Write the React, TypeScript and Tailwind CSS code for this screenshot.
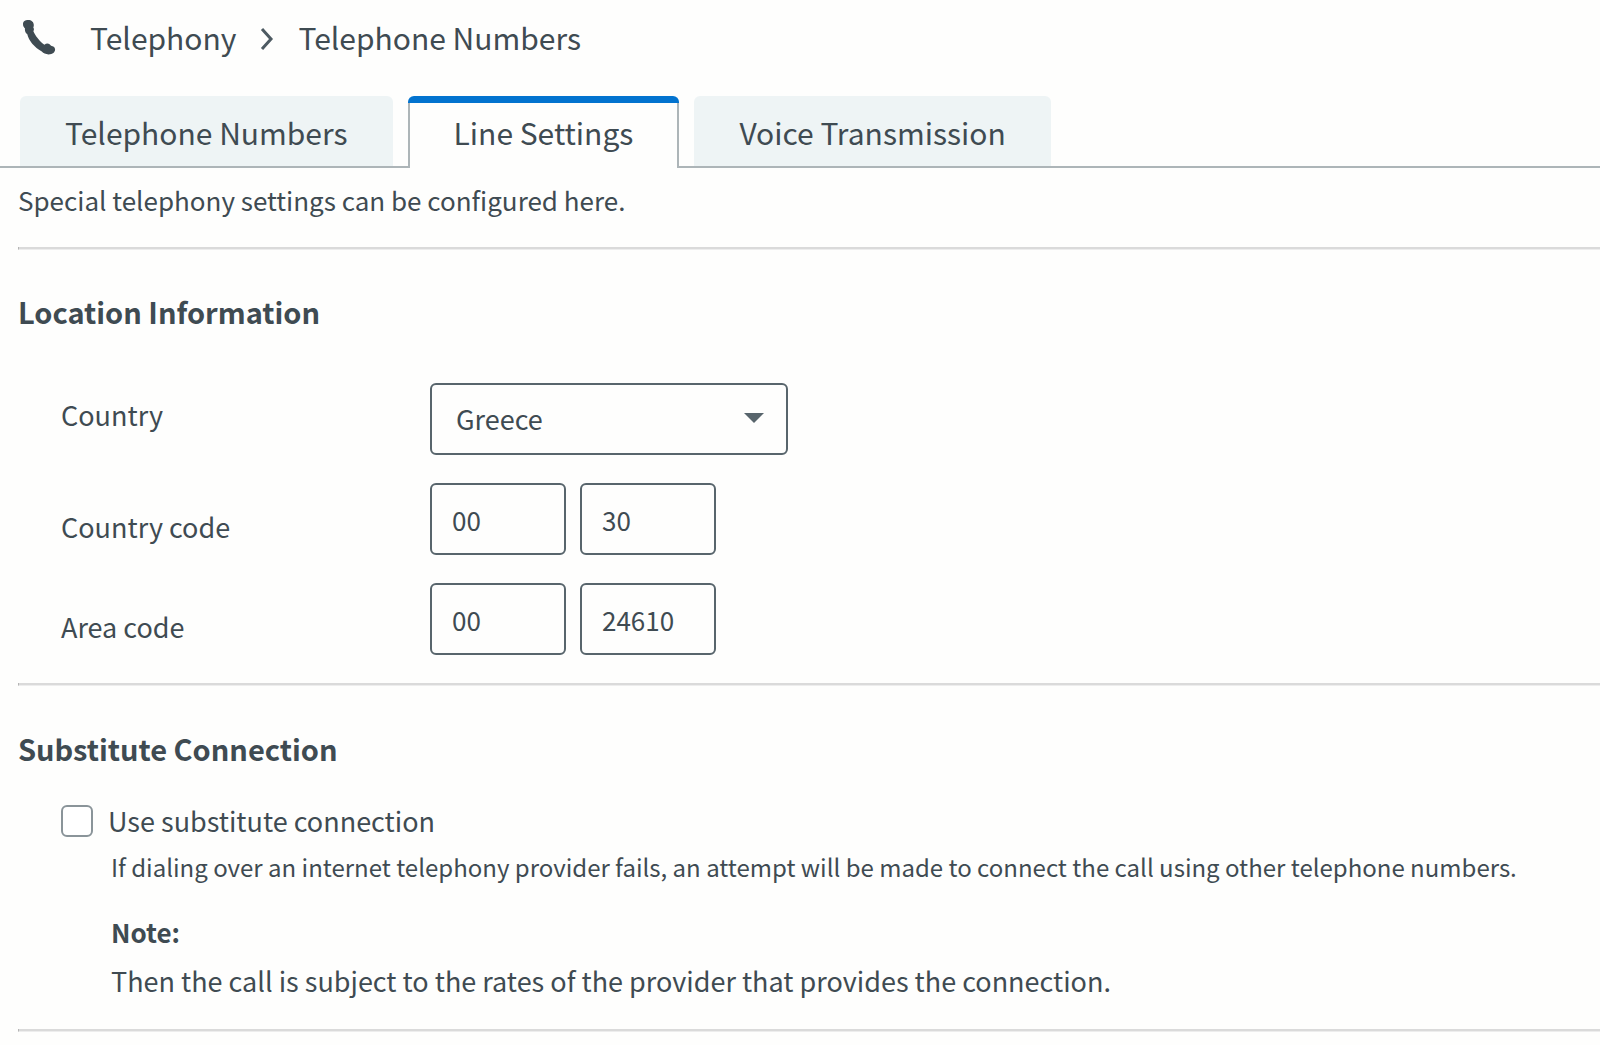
import { useState } from "react";

function PhoneIcon() {
  return (
    <svg viewBox="0 0 36 38" className="h-[38px] w-9 shrink-0" fill="#3f4b52" aria-hidden="true">
      <path d="M3 7C3 4.200 5.200 3 8.200 3c3.200 0 5.600 2 5.600 5 0 1.200-.2 1.800-.5 2.600 1 1.200.7 2.400.1 3.600 1.400 4 6.600 10.400 11 13.600 1.800-1.600 3.700-1.700 5.200-.5.600.8 1.200 1.400 2.200 1.600 2.300.4 3.300 2 3.300 3.700 0 2.600-2.400 4.800-6.500 4.800-3.100 0-5.100-1-6.800-2.800C14.300 30.400 8.600 23.500 7.300 17.300 5 15.400 4.600 13 5 11.400 3.700 10.400 3 9 3 7Z" />
    </svg>
  );
}

function ChevronIcon() {
  return (
    <svg viewBox="0 0 14 24" className="h-6 w-3.5 shrink-0" fill="none" stroke="#4d5a62" strokeWidth="3" aria-hidden="true">
      <path d="M2 2l9 10-9 10" />
    </svg>
  );
}

const tabs = ["Telephone Numbers", "Line Settings", "Voice Transmission"];

function Tabs() {
  const [active, setActive] = useState("Line Settings");
  return (
    <div role="tablist" className="flex h-[72px] gap-[15px] border-b-2 border-[#adb5b8] pl-5 text-[30px]">
      {tabs.map((tab) =>
        tab === active ? (
          <button key={tab} role="tab" aria-selected="true" className="-mb-0.5 flex flex-col overflow-hidden rounded-t-md">
            <span className="h-[7px] w-full shrink-0 bg-[#0273cf]" />
            <span className="flex w-full flex-1 items-center border-x-2 border-[#adb5b8] bg-[#fefefd] px-11 pb-[7px]">
              {tab}
            </span>
          </button>
        ) : (
          <button
            key={tab}
            role="tab"
            aria-selected="false"
            onClick={() => setActive(tab)}
            className="rounded-t-md bg-[#eef4f5] px-[45px] pt-px"
          >
            {tab}
          </button>
        ),
      )}
    </div>
  );
}

function Divider() {
  return <hr className="h-[3px] border-b border-l border-t-0 border-b-[#ededed] border-l-[#b5b5b5] bg-[#dadada]" />;
}

const field = "h-[72px] rounded-md border-2 border-[#58656c] bg-[#fefefd]";

function CodeRow({ id, label, prefix, value }: { id: string; label: string; prefix: string; value: string }) {
  return (
    <div className="flex">
      <label htmlFor={id} className="w-[369px] shrink-0 pt-6">
        {label}
      </label>
      <div className="flex gap-3.5">
        <input id={id} defaultValue={prefix} className={`${field} w-[136px] px-5 text-[26px]`} />
        <input aria-label={`${label} number`} defaultValue={value} className={`${field} w-[136px] px-5 text-[26px]`} />
      </div>
    </div>
  );
}

export default function App() {
  return (
    <div className="min-h-screen overflow-x-hidden bg-[#fefefd] font-['Noto_Sans_CJK_SC',sans-serif] text-[27px] leading-10 text-[#3f4b52]">
      <nav aria-label="Breadcrumb" className="flex h-24 items-start pl-5 pt-[17px] text-[30px]">
        <PhoneIcon />
        <a href="#telephony" className="ml-[34px]">
          Telephony
        </a>
        <span className="mx-6 flex h-11 items-center">
          <ChevronIcon />
        </span>
        <a href="#numbers">Telephone Numbers</a>
      </nav>
      <Tabs />
      <main className="pl-[18px]">
        <p className="pb-[27px] pt-3 text-[26px]">Special telephony settings can be configured here.</p>
        <Divider />
        <section className="pb-7 pt-[41px]">
          <h2 className="text-[29px] font-bold">Location Information</h2>
          <div className="flex flex-col gap-7 pl-[43px] pt-[52px]">
            <div className="flex">
              <label htmlFor="country" className="w-[369px] shrink-0 pt-3">
                Country
              </label>
              <div className="relative">
                <select id="country" className={`${field} w-[358px] appearance-none pl-6`}>
                  <option>Greece</option>
                </select>
                <svg viewBox="0 0 20 10" className="pointer-events-none absolute right-6 top-[30px] h-2.5 w-5" fill="#58656c" aria-hidden="true">
                  <path d="M0 0h20L10 10Z" />
                </svg>
              </div>
            </div>
            <CodeRow id="country-code" label="Country code" prefix="00" value="30" />
            <CodeRow id="area-code" label="Area code" prefix="00" value="24610" />
          </div>
        </section>
        <Divider />
        <section className="pb-7 pt-[42px]">
          <h2 className="text-[29px] font-bold">Substitute Connection</h2>
          <div className="pl-[43px] pt-[33px]">
            <div className="flex items-center gap-[15px]">
              <input
                id="substitute"
                type="checkbox"
                className="size-8 appearance-none rounded-md border-2 border-[#8a9499] bg-white checked:bg-[#0273cf]"
              />
              <label htmlFor="substitute">Use substitute connection</label>
            </div>
            <div className="pl-[50px]">
              <p className="pt-1.5 text-2xl leading-10">
                If dialing over an internet telephony provider fails, an attempt will be made to connect the call using other telephone numbers.
              </p>
              <p className="pt-[25px] text-[26px] font-bold">Note:</p>
              <p className="pt-[9px]">Then the call is subject to the rates of the provider that provides the connection.</p>
            </div>
          </div>
        </section>
        <Divider />
      </main>
    </div>
  );
}
